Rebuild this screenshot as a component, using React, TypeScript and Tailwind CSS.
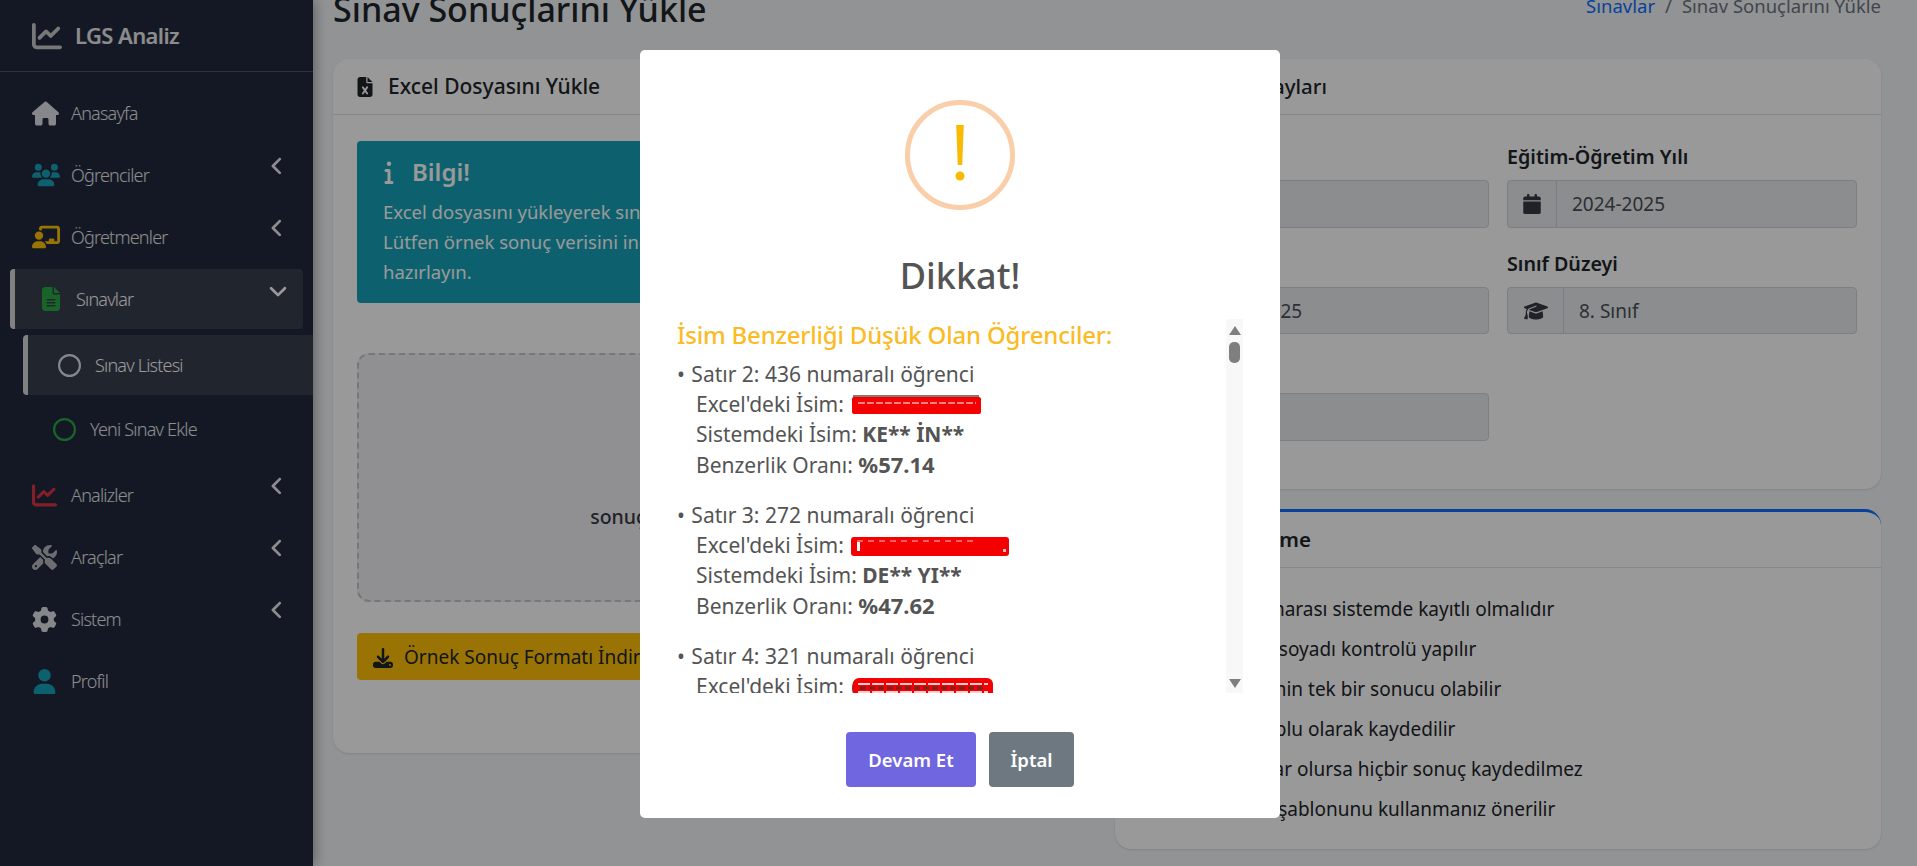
import type { ReactNode } from "react";
import {
  FaAngleDown,
  FaAngleLeft,
  FaCalendar,
  FaChalkboardUser,
  FaChartLine,
  FaCheck,
  FaDownload,
  FaFileExcel,
  FaFileLines,
  FaGear,
  FaGraduationCap,
  FaHouse,
  FaInfo,
  FaRegCircle,
  FaScrewdriverWrench,
  FaUser,
  FaUsers,
} from "react-icons/fa6";

const font = "font-['Noto_Sans','Open_Sans',sans-serif]";

function NavItem({ icon, label, arrow }: { icon: ReactNode; label: string; arrow?: boolean }) {
  return (
    <div className="relative flex h-[60px] items-center pl-[32px] text-[18px] font-light tracking-[-0.8px] text-white/90">
      <span className="flex w-[39px] shrink-0 items-center">{icon}</span>
      <span>{label}</span>
      {arrow && <FaAngleLeft className="absolute right-[25px] top-[10px] text-[22px]" />}
    </div>
  );
}

function Field({ icon, value, iconWidth }: { icon: ReactNode; value: string; iconWidth: string }) {
  return (
    <div className="flex h-full rounded-[4px] border border-[#ced4da] bg-[#e9ecef] text-[19px] text-[#495057]">
      <span className={`flex shrink-0 items-center justify-center border-r border-[#ced4da] ${iconWidth}`}>{icon}</span>
      <span className="flex items-center pl-[15px] pt-[1px]">{value}</span>
    </div>
  );
}

function Label({ text }: { text?: string }) {
  return <div className="mb-[10px] h-[27px] text-[19.7px] font-semibold leading-[27px] text-[#212529]">{text}</div>;
}

// the hand-drawn red marks over the names in the Excel file
function Redaction({ width, children }: { width: number; children: ReactNode }) {
  return (
    <svg width={width} height="22" viewBox={`0 0 ${width} 22`} className="ml-[2px] inline-block align-[-5px]">
      {children}
    </svg>
  );
}

function Row({ line, no, redaction, system, rate }: { line: number; no: number; redaction: ReactNode; system?: string; rate?: string }) {
  return (
    <div className="mb-[20px]">
      <div>
        <span className="mr-[1px]">•</span> Satır {line}: {no} numaralı öğrenci
      </div>
      <div className="pl-[19px]">Excel'deki İsim: {redaction}</div>
      {system && <div className="pl-[19px]">Sistemdeki İsim: <b className="font-bold">{system}</b></div>}
      {rate && <div className="pl-[19px]">Benzerlik Oranı: <b className="text-[22px] font-bold">{rate}</b></div>}
    </div>
  );
}

export default function App() {
  const rules = [
    { text: "Öğrenci numarası sistemde kayıtlı olmalıdır", indent: "-ml-[7px]" },
    { text: "Öğrenci ad-soyadı kontrolü yapılır", indent: "ml-0" },
    { text: "Her öğrencinin tek bir sonucu olabilir", indent: "-ml-[5px]" },
    { text: "Hepsi toplu olarak kaydedilir", indent: "ml-[26px]" },
    { text: "Bazı hatalar olursa hiçbir sonuç kaydedilmez", indent: "ml-[12px]" },
    { text: "Örnek Excel şablonunu kullanmanız önerilir", indent: "-ml-[7px]" },
  ];

  return (
    <div className={`relative flex h-[866px] w-full overflow-hidden bg-[#f4f6f9] ${font}`}>
      <aside className="z-10 h-full w-[313px] shrink-0 bg-[#21283c] shadow-[0_0_14px_rgba(0,0,0,0.45)]">
        <div className="flex h-[72px] items-center border-b border-[#4b5263] pl-[32px] text-white/90">
          <FaChartLine className="mr-[13px] text-[30px] text-[#c9c9c9]" />
          <span className="text-[22px] font-semibold tracking-[-0.6px]">LGS Analiz</span>
        </div>
        <nav className="flex flex-col gap-[2px] pt-[11px]">
          <NavItem icon={<FaHouse className="text-[27px] text-[#dee2e6]" />} label="Anasayfa" />
          <NavItem icon={<FaUsers className="text-[28px] text-[#17a2b8]" />} label="Öğrenciler" arrow />
          <NavItem icon={<FaChalkboardUser className="text-[28px] text-[#ffc107]" />} label="Öğretmenler" arrow />
          <div className="relative mx-[10px] flex h-[60px] items-center rounded-[4px] border-l-[5px] border-[#d8d8d8] bg-[#383e4e] pl-[24px] text-[18px] font-light tracking-[-0.8px] text-white">
            <FaFileLines className="mr-[13px] text-[24px] text-[#28a745]" />
            Sınavlar
            <FaAngleDown className="absolute right-[14px] top-[11px] text-[22px]" />
          </div>
          <div className="my-[4px] flex flex-col gap-[4px]">
            <div className="ml-[23px] flex h-[60px] items-center rounded-l-[4px] border-l-[5px] border-[#d8d8d8] bg-[#383e4e] pl-[30px] text-[18px] font-light tracking-[-0.8px] text-white">
              <FaRegCircle className="mr-[14px] text-[23px] text-[#dee2e6]" />
              Sınav Listesi
            </div>
            <div className="flex h-[60px] items-center pl-[53px] text-[18px] font-light tracking-[-0.8px] text-white/90">
              <FaRegCircle className="mr-[14px] text-[23px] text-[#28a745]" />
              Yeni Sınav Ekle
            </div>
          </div>
          <NavItem icon={<FaChartLine className="text-[25px] text-[#dc3545]" />} label="Analizler" arrow />
          <NavItem icon={<FaScrewdriverWrench className="text-[25px] text-[#b4b7bd]" />} label="Araçlar" arrow />
          <NavItem icon={<FaGear className="text-[25px] text-[#dee2e6]" />} label="Sistem" arrow />
          <NavItem icon={<FaUser className="text-[25px] text-[#17a2b8]" />} label="Profil" />
        </nav>
      </aside>

      <main className="min-w-0 flex-1 pl-[20px] pr-[36px]">
        <div className="mt-[-15px] flex h-[74px] items-start justify-between">
          <h1 className="text-[34px] font-medium leading-[48px] text-[#212529]">Sınav Sonuçlarını Yükle</h1>
          <div className="pt-[7px] text-[18.5px] text-[#6c757d]">
            <span className="text-[#0d6efd]">Sınavlar</span>
            <span className="mx-[10px]">/</span>
            Sınav Sonuçlarını Yükle
          </div>
        </div>

        <div className="flex items-start gap-[18px]">
          <section className="h-[694px] w-[764px] shrink-0 rounded-[16px] bg-white shadow-sm">
            <div className="flex h-[56px] items-center border-b border-[#dee2e6] pl-[22px] pt-[1px] text-[21px] font-medium text-[#212529]">
              <FaFileExcel className="mr-[13px] text-[20px]" />
              Excel Dosyasını Yükle
            </div>
            <div className="px-[24px] pt-[26px]">
              <div className="h-[162px] rounded-[4px] bg-[#17a2b8] px-[26px] pt-[13px] text-[18.5px] leading-[30px] text-white">
                <div className="-ml-[6px] mb-[7px] flex items-center text-[24px] font-semibold leading-[36px]">
                  <FaInfo className="mr-[11px] text-[24px]" />
                  Bilgi!
                </div>
                <div>Excel dosyasını yükleyerek sınav sonuçlarını sisteme aktarabilirsiniz.</div>
                <div>Lütfen örnek sonuç verisini indirerek dosyanızı aynı formatta</div>
                <div>hazırlayın.</div>
              </div>
              <div className="mt-[50px] flex h-[249px] items-center justify-center rounded-[12px] border-2 border-dashed border-[#c4c6c9] bg-[#f0f1f3] pt-[78px] text-[19.5px] font-medium text-[#343a40]">
                sonuç dosyasını sürükleyin
              </div>
              <div className="mt-[31px] flex h-[47px] w-[360px] items-center rounded-[4px] bg-[#ffc107] pl-[16px] pt-[2px] text-[19px] text-[#212529]">
                <FaDownload className="mr-[11px] text-[20px]" />
                Örnek Sonuç Formatı İndir
              </div>
            </div>
          </section>

          <div className="flex min-w-0 flex-1 flex-col gap-[20px]">
            <section className="h-[430px] rounded-[16px] bg-white shadow-sm">
              <div className="flex h-[56px] items-center justify-end whitespace-nowrap border-b border-[#dee2e6] pr-[554px] text-[20.5px] font-medium text-[#212529]">
                Sınav Detayları
              </div>
              <div className="grid grid-cols-2 gap-x-[18px] px-[24px] pt-[28px]">
                <div className="mb-[22px]">
                  <Label />
                  <div className="h-[48px]">
                    <Field icon={<FaCalendar />} value="LGS" iconWidth="w-[50px]" />
                  </div>
                </div>
                <div className="mb-[22px]">
                  <Label text="Eğitim-Öğretim Yılı" />
                  <div className="h-[48px]">
                    <Field icon={<FaCalendar className="text-[20px] text-[#343a40]" />} value="2024-2025" iconWidth="w-[49px]" />
                  </div>
                </div>
                <div className="mb-[22px]">
                  <Label />
                  <div className="mt-[3px] h-[47px]">
                    <Field icon={<FaCalendar />} value="07.06.2025" iconWidth="w-[50px]" />
                  </div>
                </div>
                <div className="mb-[22px]">
                  <Label text="Sınıf Düzeyi" />
                  <div className="mt-[3px] h-[47px]">
                    <Field icon={<FaGraduationCap className="text-[24px] text-[#343a40]" />} value="8. Sınıf" iconWidth="w-[56px]" />
                  </div>
                </div>
                <div>
                  <Label />
                  <div className="h-[48px]">
                    <Field icon={<FaFileLines />} value="" iconWidth="w-[50px]" />
                  </div>
                </div>
              </div>
            </section>

            <section className="h-[340px] rounded-[16px] border-t-[3px] border-[#0d6efd] bg-white shadow-sm">
              <div className="flex h-[56px] items-center justify-end whitespace-nowrap border-b border-[#dee2e6] pr-[570px] text-[20.5px] font-semibold text-[#212529]">
                Bilgilendirme
              </div>
              <ul className="pl-[32px] pt-[21px] text-[19px] leading-[40px] text-[#212529]">
                {rules.map((rule) => (
                  <li key={rule.text} className="flex items-center">
                    <FaCheck className="mr-[12px] text-[16px]" />
                    <span className={rule.indent}>{rule.text}</span>
                  </li>
                ))}
              </ul>
            </section>
          </div>
        </div>
      </main>

      <div className="absolute inset-0 z-20 flex items-center justify-center bg-black/40 pl-[3px] pt-[2px]">
        <div className="flex h-[768px] w-[640px] flex-col items-center rounded-[5px] bg-white">
          <div className="mt-[50px] flex h-[110px] w-[110px] shrink-0 items-center justify-center rounded-full border-[5px] border-[#facea8]">
            <svg width="12" height="60" viewBox="0 0 12 60">
              <path d="M2.2 0h7.6l-1.6 40h-4.4z" fill="#f8bb00" />
              <circle cx="6" cy="51" r="4.5" fill="#f8bb00" />
            </svg>
          </div>
          <h2 className="mt-[39px] text-[36px] font-medium leading-[54px] text-[#545454]">Dikkat!</h2>
          <div className="relative mt-[16px] flex h-[374px] w-[566px] shrink-0 overflow-hidden text-[21px] leading-[30px] text-[#545454]">
            <div className="flex-1">
              <div className="mb-[8px] text-[24px] font-medium leading-[32px] tracking-[-0.2px] text-[#fabb25]">İsim Benzerliği Düşük Olan Öğrenciler:</div>
              <Row
                line={2}
                no={436}
                system="KE** İN**"
                rate="%57.14"
                redaction={
                  <Redaction width={130}>
                    <path d="M2 0h126v3H2z" fill="#5a3a3a" opacity="0.7" />
                    <rect x="1" y="2" width="129" height="17" rx="2" fill="#f40000" />
                    <path d="M7 8h118" stroke="#f9b0b0" strokeWidth="1.5" strokeDasharray="7 2" />
                  </Redaction>
                }
              />
              <Row
                line={3}
                no={272}
                system="DE** YI**"
                rate="%47.62"
                redaction={
                  <Redaction width={159}>
                    <rect x="0" y="1" width="158" height="19" rx="3" fill="#f40000" />
                    <path d="M6 5h118" stroke="#f9c0c0" strokeWidth="1" strokeDasharray="6 5" />
                    <path d="M6 6h3v9H6z" fill="#fff" />
                    <path d="M152 13h3v3h-3z" fill="#b9c0d0" />
                  </Redaction>
                }
              />
              <Row
                line={4}
                no={321}
                redaction={
                  <Redaction width={146}>
                    <ellipse cx="5" cy="11" rx="4" ry="8" fill="#7a3030" />
                    <rect x="2" y="1" width="140" height="20" rx="6" fill="#f40000" />
                    <path d="M7 7h130M7 15h130" stroke="#fbd0d0" strokeWidth="2" strokeDasharray="12 2" />
                    <path d="M9 11h126" stroke="#7a2020" strokeWidth="3" strokeDasharray="6 3" />
                  </Redaction>
                }
              />
            </div>
            <div className="flex w-[17px] shrink-0 flex-col items-center bg-[#f8f8f8] pt-[7px]">
              <span className="h-0 w-0 border-x-[6px] border-b-[9px] border-x-transparent border-b-[#7f7f7f]" />
              <span className="mt-[7px] h-[21px] w-[11px] rounded-[5px] bg-[#7f7f7f]" />
              <span className="mb-[5px] mt-auto h-0 w-0 border-x-[6px] border-t-[9px] border-x-transparent border-t-[#7f7f7f]" />
            </div>
          </div>
          <div className="mt-[39px] flex gap-[13px] text-[18.5px] font-semibold text-white">
            <button className="h-[55px] w-[130px] rounded-[4px] bg-[#7066e0]">Devam Et</button>
            <button className="h-[55px] w-[85px] rounded-[4px] bg-[#6e7881]">İptal</button>
          </div>
        </div>
      </div>
    </div>
  );
}
